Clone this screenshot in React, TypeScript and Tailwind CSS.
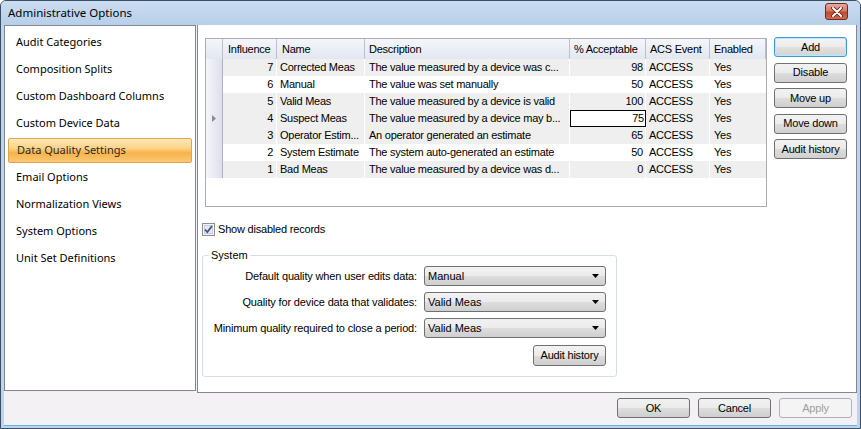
import React from 'react';

const rows = [
  { inf: 7, name: 'Corrected Meas', desc: 'The value measured by a device was c...', pct: 98, gray: true },
  { inf: 6, name: 'Manual', desc: 'The value was set manually', pct: 50, gray: false },
  { inf: 5, name: 'Valid Meas', desc: 'The value measured by a device is valid', pct: 100, gray: true },
  { inf: 4, name: 'Suspect Meas', desc: 'The value measured by a device may b...', pct: 75, gray: true, current: true },
  { inf: 3, name: 'Operator Estim...', desc: 'An operator generated an estimate', pct: 65, gray: true },
  { inf: 2, name: 'System Estimate', desc: 'The system auto-generated an estimate', pct: 50, gray: false },
  { inf: 1, name: 'Bad Meas', desc: 'The value measured by a device was d...', pct: 0, gray: true },
];

const menu = [
  'Audit Categories',
  'Composition Splits',
  'Custom Dashboard Columns',
  'Custom Device Data',
  'Data Quality Settings',
  'Email Options',
  'Normalization Views',
  'System Options',
  'Unit Set Definitions',
];

// win7 style push button
function Btn({ children, focus, disabled, className = '' }: { children: React.ReactNode; focus?: boolean; disabled?: boolean; className?: string }) {
  let look = 'border-[#707070] text-black bg-[linear-gradient(to_bottom,#f2f2f2_0%,#ebebeb_50%,#dddddd_51%,#cfcfcf_100%)]';
  if (focus) look = 'border-[#3c9ad6] text-black shadow-[inset_0_0_0_1px_#bfe6fb] bg-[linear-gradient(to_bottom,#f4f4f4_0%,#ececec_50%,#e0e0e0_51%,#d4d4d4_100%)]';
  if (disabled) look = 'border-[#adb2b5] text-[#a0a0a0] bg-[#f4f4f4]';
  return (
    <button className={`flex h-[20px] w-[73px] items-center justify-center rounded-[3px] border text-[11px] leading-none tracking-[-0.2px] ${look} ${className}`}>
      {children}
    </button>
  );
}

function Combo({ value }: { value: string }) {
  return (
    <div className="flex h-[20px] w-[182px] items-center justify-between rounded-[3px] border border-[#707070] bg-[linear-gradient(to_bottom,#f2f2f2_0%,#ebebeb_50%,#dddddd_51%,#cfcfcf_100%)] pl-[3px] pr-[6px] text-[11px]">
      <span>{value}</span>
      <svg width="7" height="4" viewBox="0 0 7 4">
        <polygon points="0,0 7,0 3.5,4" fill="#000" />
      </svg>
    </div>
  );
}

export default function App() {
  return (
    <div className="h-[429px] w-[861px] bg-white font-['Liberation_Sans',Arial,sans-serif] text-black">
      <div className="flex h-full w-full flex-col overflow-hidden rounded-t-[6px] border border-[#3e4e62] bg-[#bed3ec]">
        {/* title bar */}
        <div className="flex h-[24px] items-center justify-between bg-[linear-gradient(to_bottom,#cadcf0,#b8cfe9)] pl-[7px] pr-[12px]">
          <span className="font-['Noto_Sans',sans-serif] text-[11.5px]">Administrative Options</span>
          <div className="mt-[-3px] flex h-[17px] w-[23px] items-center justify-center rounded-[3px] border border-[#6b2a22] bg-[linear-gradient(to_bottom,#e9a99c_0%,#d47a66_45%,#c24a33_55%,#d26a4f_100%)]">
            <svg width="12" height="10" viewBox="0 0 12 10">
              <path d="M2 1 L10 9 M10 1 L2 9" stroke="#5a1d14" strokeWidth="3.6" strokeLinecap="round" />
              <path d="M2 1 L10 9 M10 1 L2 9" stroke="#ffffff" strokeWidth="2" strokeLinecap="round" />
            </svg>
          </div>
        </div>

        <div className="mx-[3px] mb-[2px] flex h-[401px] flex-col border-b border-[#5fb4e5] bg-[#f4f1f5]">
          <div className="flex h-[368px] gap-[1px]">
            {/* left list */}
            <div className="h-[366px] w-[192px] border border-[#828790] bg-white px-[3px] pt-[4px] font-['Noto_Sans',sans-serif] text-[11px]">
              {menu.map((m) => (
                <div
                  key={m}
                  className={`mb-[2px] flex h-[25px] items-center pl-[8px] ${
                    m === 'Data Quality Settings'
                      ? 'rounded-[2px] border border-[#e1a547] bg-[linear-gradient(to_bottom,#fde8b8_0%,#fcd488_40%,#f8b24a_60%,#fbc872_100%)] pl-[7px] text-[#2a2a2a]'
                      : ''
                  }`}
                >
                  {m}
                </div>
              ))}
            </div>

            {/* right pane */}
            <div className="h-[368px] w-[660px] border-x border-b border-[#828790] bg-white pl-[4px] pt-[13px]">
              <div className="flex">
                {/* data grid */}
                <div className="ml-[3px] h-[169px] w-[562px] border border-[#a9acb3] bg-white text-[11px] tracking-[-0.25px]">
                  <div className="flex h-[20px] bg-[linear-gradient(to_bottom,#f4f6fa,#e2e7f0)]">
                    <div className="w-[17px] border-r border-[#b6c1d5]" />
                    <div className="flex w-[54px] items-center border-r border-[#b6c1d5] pl-[5px]">Influence</div>
                    <div className="flex w-[88px] items-center border-r border-[#b6c1d5] pl-[5px]">Name</div>
                    <div className="flex w-[205px] items-center border-r border-[#b6c1d5] pl-[4px]">Description</div>
                    <div className="flex w-[76px] items-center border-r border-[#b6c1d5] pl-[4px]">% Acceptable</div>
                    <div className="flex w-[64px] items-center border-r border-[#b6c1d5] pl-[4px]">ACS Event</div>
                    <div className="flex w-[56px] items-center border-r border-[#b6c1d5] pl-[4px]">Enabled</div>
                  </div>
                  {rows.map((r) => (
                    <div key={r.inf} className={`flex h-[17px] ${r.gray ? 'bg-[#efefef]' : 'bg-white'}`}>
                      <div className="flex w-[17px] items-center justify-center border-r border-[#aab4c8] bg-[linear-gradient(to_right,#f6f6fb,#dcdfeb)]">
                        {r.current && (
                          <svg width="4" height="7" viewBox="0 0 4 7">
                            <polygon points="0,0 4,3.5 0,7" fill="#8a8a8a" />
                          </svg>
                        )}
                      </div>
                      <div className="flex w-[54px] items-center justify-end border-r border-white pr-[3px]">{r.inf}</div>
                      <div className="flex w-[88px] items-center overflow-hidden whitespace-nowrap border-r border-white pl-[3px]">{r.name}</div>
                      <div className="flex w-[205px] items-center overflow-hidden whitespace-nowrap border-r border-white pl-[4px]">{r.desc}</div>
                      {r.current ? (
                        <div className="flex w-[76px] items-center justify-end border border-black bg-white pr-[1px]">{r.pct}</div>
                      ) : (
                        <div className="flex w-[76px] items-center justify-end border-r border-white pr-[2px]">{r.pct}</div>
                      )}
                      <div className="flex w-[64px] items-center border-r border-white pl-[3px]">ACCESS</div>
                      <div className="flex w-[56px] items-center pl-[4px]">Yes</div>
                    </div>
                  ))}
                </div>

                {/* side buttons */}
                <div className="ml-[7px] mt-[-1px] flex flex-col gap-[5.5px]">
                  <Btn focus>Add</Btn>
                  <Btn>Disable</Btn>
                  <Btn>Move up</Btn>
                  <Btn>Move down</Btn>
                  <Btn>Audit history</Btn>
                </div>
              </div>

              {/* show disabled */}
              <div className="mt-[16px] flex h-[13px] items-center gap-[3px] text-[11px] tracking-[-0.2px]">
                <svg width="13" height="13" viewBox="0 0 13 13">
                  <rect x="0.5" y="0.5" width="12" height="12" fill="#f4f4f4" stroke="#8e8f8f" />
                  <rect x="2.5" y="2.5" width="8" height="8" fill="#e6e9ee" stroke="#c9ccd2" />
                  <path d="M3 6.5 L5.3 9 L10 3" fill="none" stroke="#3d5797" strokeWidth="1.8" />
                </svg>
                <span>Show disabled records</span>
              </div>

              {/* system group */}
              <fieldset className="mt-[13px] h-[128px] w-[415px] rounded-[3px] border border-[#d5dfe5] text-[11px]">
                <legend className="ml-[6px] px-[2px] leading-[13px]">System</legend>
                <div className="flex flex-col gap-[6px] pt-[4px]">
                  <div className="flex items-center">
                    <span className="w-[214px] text-right tracking-[-0.15px]">Default quality when user edits data:</span>
                    <div className="ml-[7px]"><Combo value="Manual" /></div>
                  </div>
                  <div className="flex items-center">
                    <span className="w-[214px] text-right tracking-[-0.15px]">Quality for device data that validates:</span>
                    <div className="ml-[7px]"><Combo value="Valid Meas" /></div>
                  </div>
                  <div className="flex items-center">
                    <span className="w-[214px] text-right tracking-[-0.15px]">Minimum quality required to close a period:</span>
                    <div className="ml-[7px]"><Combo value="Valid Meas" /></div>
                  </div>
                  <div className="flex justify-end pr-[10px] pt-[1px]">
                    <Btn className="h-[21px]">Audit history</Btn>
                  </div>
                </div>
              </fieldset>
            </div>
          </div>

          {/* footer buttons */}
          <div className="flex flex-1 justify-end gap-[8px] pr-[5px] pt-[5px]">
            <Btn>OK</Btn>
            <Btn>Cancel</Btn>
            <Btn disabled>Apply</Btn>
          </div>
        </div>
      </div>
    </div>
  );
}
